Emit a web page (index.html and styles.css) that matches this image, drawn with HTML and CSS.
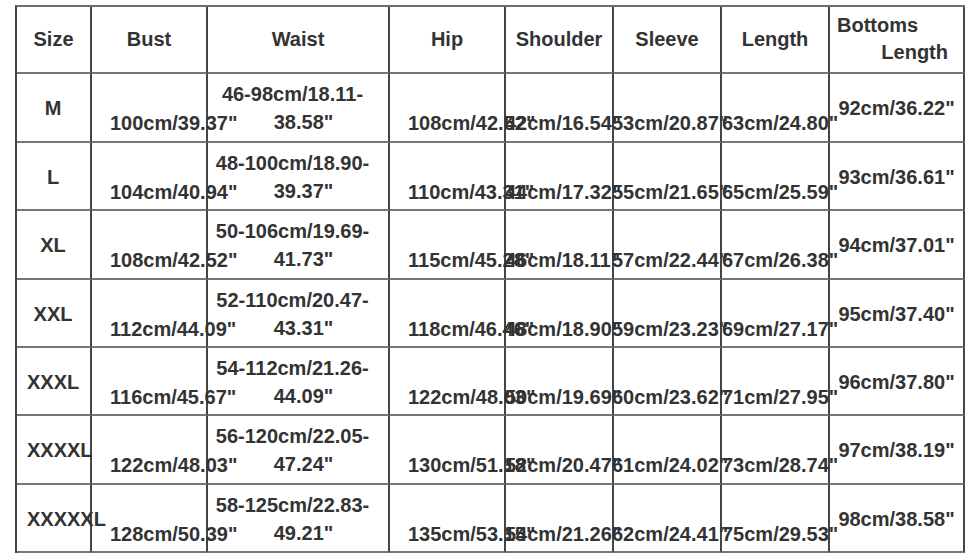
FILE: index.html
```html
<!DOCTYPE html>
<html lang="en">
<head>
<meta charset="utf-8">
<title>Size Chart</title>
<link rel="stylesheet" href="styles.css">
</head>
<body>
<div class="chart">
  <div class="cell head">Size</div>
  <div class="cell head">Bust</div>
  <div class="cell head">Waist</div>
  <div class="cell head">Hip</div>
  <div class="cell head">Shoulder</div>
  <div class="cell head">Sleeve</div>
  <div class="cell head">Length</div>
  <div class="cell head-split"><span class="l1">Bottoms</span><span class="l2">Length</span></div>

  <div class="cell size">M</div>
  <div class="cell bust">100cm/39.37"</div>
  <div class="cell waist"><span class="w1">46-98cm/18.11-</span><span class="w2">38.58"</span></div>
  <div class="cell hip">108cm/42.52"</div>
  <div class="cell shoulder">42cm/16.54"</div>
  <div class="cell sleeve">53cm/20.87"</div>
  <div class="cell length">63cm/24.80"</div>
  <div class="cell bottoms">92cm/36.22"</div>

  <div class="cell size">L</div>
  <div class="cell bust">104cm/40.94"</div>
  <div class="cell waist"><span class="w1">48-100cm/18.90-</span><span class="w2">39.37"</span></div>
  <div class="cell hip">110cm/43.31"</div>
  <div class="cell shoulder">44cm/17.32"</div>
  <div class="cell sleeve">55cm/21.65"</div>
  <div class="cell length">65cm/25.59"</div>
  <div class="cell bottoms">93cm/36.61"</div>

  <div class="cell size">XL</div>
  <div class="cell bust">108cm/42.52"</div>
  <div class="cell waist"><span class="w1">50-106cm/19.69-</span><span class="w2">41.73"</span></div>
  <div class="cell hip">115cm/45.28"</div>
  <div class="cell shoulder">46cm/18.11"</div>
  <div class="cell sleeve">57cm/22.44"</div>
  <div class="cell length">67cm/26.38"</div>
  <div class="cell bottoms">94cm/37.01"</div>

  <div class="cell size">XXL</div>
  <div class="cell bust">112cm/44.09"</div>
  <div class="cell waist"><span class="w1">52-110cm/20.47-</span><span class="w2">43.31"</span></div>
  <div class="cell hip">118cm/46.46"</div>
  <div class="cell shoulder">48cm/18.90"</div>
  <div class="cell sleeve">59cm/23.23"</div>
  <div class="cell length">69cm/27.17"</div>
  <div class="cell bottoms">95cm/37.40"</div>

  <div class="cell size">XXXL</div>
  <div class="cell bust">116cm/45.67"</div>
  <div class="cell waist"><span class="w1">54-112cm/21.26-</span><span class="w2">44.09"</span></div>
  <div class="cell hip">122cm/48.03"</div>
  <div class="cell shoulder">50cm/19.69"</div>
  <div class="cell sleeve">60cm/23.62"</div>
  <div class="cell length">71cm/27.95"</div>
  <div class="cell bottoms">96cm/37.80"</div>

  <div class="cell size size-long">XXXXL</div>
  <div class="cell bust">122cm/48.03"</div>
  <div class="cell waist"><span class="w1">56-120cm/22.05-</span><span class="w2">47.24"</span></div>
  <div class="cell hip">130cm/51.18"</div>
  <div class="cell shoulder">52cm/20.47"</div>
  <div class="cell sleeve">61cm/24.02"</div>
  <div class="cell length">73cm/28.74"</div>
  <div class="cell bottoms">97cm/38.19"</div>

  <div class="cell size size-long">XXXXXL</div>
  <div class="cell bust">128cm/50.39"</div>
  <div class="cell waist"><span class="w1">58-125cm/22.83-</span><span class="w2">49.21"</span></div>
  <div class="cell hip">135cm/53.15"</div>
  <div class="cell shoulder">54cm/21.26"</div>
  <div class="cell sleeve">62cm/24.41"</div>
  <div class="cell length">75cm/29.53"</div>
  <div class="cell bottoms">98cm/38.58"</div>
</div>
</body>
</html>
```

FILE: styles.css
```css
html, body {
  background: #ffffff;
}

body {
  margin: 5px 0 0 15px;
  color: #333333;
  font-family: "Liberation Sans", Arial, sans-serif;
  font-weight: bold;
  font-size: 20px;
}

.chart {
  display: grid;
  grid-template-columns: 75px 116px 182px 116px 108px 108px 108px 135px;
  grid-template-rows: 67px 69px 68px 69px 68px 68px 69px 68px;
  width: max-content;
  border-left: 2px solid #454545;
  border-top: 2px solid #6f6f6f;
}

.cell {
  box-sizing: border-box;
  min-width: 0;
  border-right: 2px solid #454545;
  border-bottom: 2px solid #777777;
  white-space: nowrap;
  line-height: 28.5px;
}

.head {
  display: flex;
  align-items: center;
  justify-content: center;
}

.head-split {
  display: flex;
  flex-direction: column;
  padding: 5px 15px 0 7px;
  line-height: 27px;
}

.l1 {
  align-self: flex-start;
}

.l2 {
  align-self: flex-end;
}

.size {
  text-align: center;
  padding: 20px 11px 0 10px;
}

.size-long {
  text-align: left;
}

.bust,
.hip {
  padding: 35px 0 0 18px;
}

.waist {
  padding-top: 5.5px;
}

.w1 {
  display: block;
  text-align: center;
  padding-right: 11px;
}

.w2 {
  display: block;
  text-align: center;
  padding-left: 11px;
}

.shoulder,
.sleeve,
.length {
  padding-top: 35px;
}

.shoulder {
  text-indent: -1px;
}

.sleeve {
  text-indent: -2px;
}

.bottoms {
  text-align: center;
  padding-top: 20px;
}
```
